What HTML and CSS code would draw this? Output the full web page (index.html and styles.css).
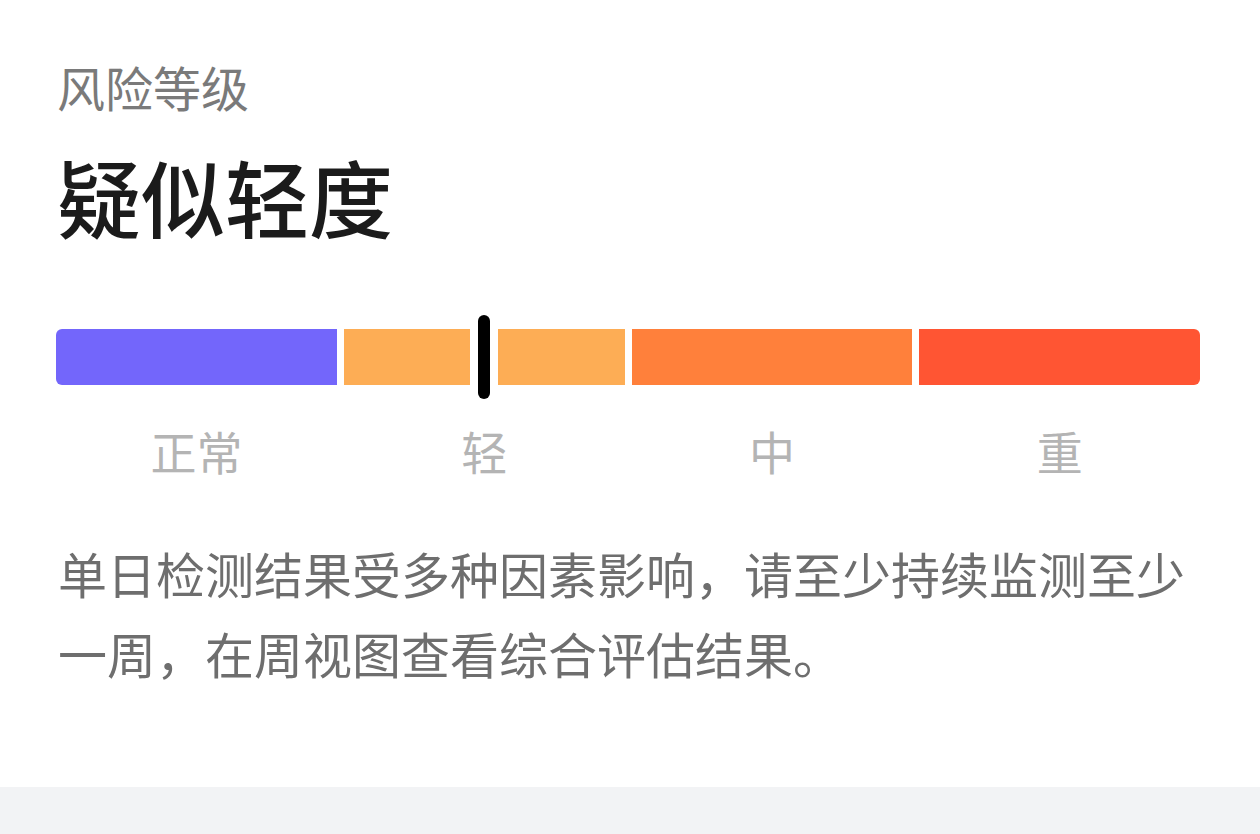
FILE: index.html
```html
<!DOCTYPE html>
<html lang="zh-CN">
<head>
    <meta charset="UTF-8">
    <meta name="viewport" content="width=device-width, initial-scale=1.0">
    <title>风险等级</title>
    <link rel="stylesheet" href="styles.css">
</head>
<body>
    <div class="card">
        <div class="caption">风险等级</div>
        <div class="level">疑似轻度</div>

        <!-- 四段风险条，指针落在“轻”段中间 -->
        <div class="scale">
            <div class="seg seg-normal"></div>
            <div class="seg seg-light">
                <span class="pointer" style="left: 50%;"></span>
            </div>
            <div class="seg seg-mid"></div>
            <div class="seg seg-heavy"></div>
        </div>
        <div class="scale-labels">
            <span>正常</span>
            <span>轻</span>
            <span>中</span>
            <span>重</span>
        </div>

        <p class="note">单日检测结果受多种因素影响，请至少持续监测至少一周，在周视图查看综合评估结果。</p>
    </div>
    <div class="footer"></div>
</body>
</html>
```

FILE: styles.css
```css
body {
    margin: 0;
    background-color: #ffffff;
    font-family: "Noto Sans CJK SC", "Noto Sans", sans-serif;
}

.card {
    padding: 56px 60px 0 56px;
    height: 726px;
    box-sizing: border-box;
}

.caption {
    font-size: 48px;
    line-height: 60px;
    color: #7a7a7a;
    padding-left: 1px;
}

.level {
    margin-top: 30px;
    font-size: 84px;
    line-height: 100px;
    font-weight: 500;
    color: #1b1b1b;
    padding-left: 1px;
}

.scale {
    display: flex;
    gap: 7px;
    height: 56px;
    margin-top: 83px;
}

.seg {
    flex: 1;
    position: relative;
}

.seg-normal {
    background-color: #7366fb;
    border-radius: 6px 0 0 6px;
}

.seg-light {
    background-color: #fdad55;
}

.seg-mid {
    background-color: #ff803b;
}

.seg-heavy {
    background-color: #ff5533;
    border-radius: 0 6px 6px 0;
}

/* 黑色指针，白边把所在色块切开 */
.pointer {
    position: absolute;
    top: -14px;
    width: 12px;
    height: 84px;
    margin-left: -6px;
    border-radius: 6px;
    background-color: #000000;
    box-shadow: 0 0 0 8px #ffffff;
}

.scale-labels {
    display: grid;
    grid-template-columns: repeat(4, 1fr);
    gap: 7px;
    margin-top: 35px;
    font-size: 46px;
    line-height: 60px;
    color: #b4b4b4;
    text-align: center;
}

.note {
    margin: 53px 0 0 0;
    font-size: 49px;
    line-height: 80px;
    color: #6e6e6e;
    padding-left: 2px;
}

.footer {
    margin-top: 61px;
    height: 47px;
    background-color: #f2f3f5;
}
```
